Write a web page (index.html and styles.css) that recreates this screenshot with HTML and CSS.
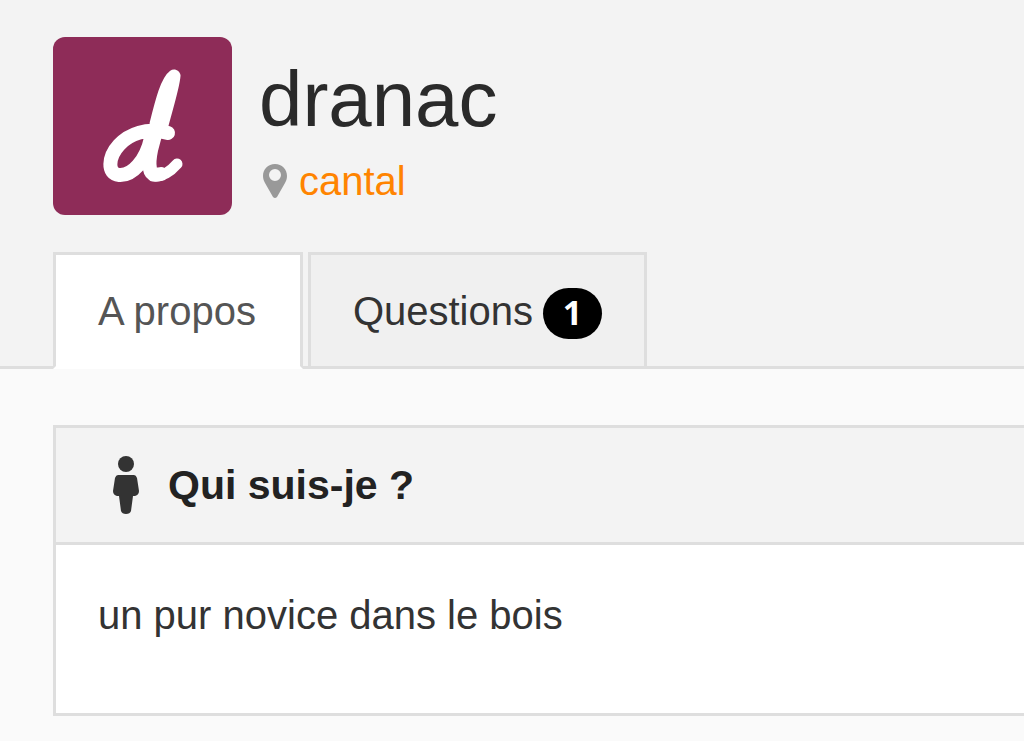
FILE: index.html
```
<!DOCTYPE html>
<html lang="fr">
<head>
<meta charset="utf-8" />
<meta name="viewport" content="width=device-width, initial-scale=1" />
<title>dranac</title>
<link rel="stylesheet" href="styles.css">
</head>

<body>
	<header class="profileHeader">
		<div class="profile">
			<svg class="avatar" viewBox="0 0 179 178" role="img" aria-label="Avatar">
				<rect width="179" height="178" rx="12" fill="#8e2c58" />
				<g fill="none" stroke="#fff" stroke-linecap="round" stroke-linejoin="round">
					<path stroke-width="13" d="M121 39C114 44 109 63 103 87M121 39C120 50 114 69 109 88" />
					<path stroke-width="14" d="M115 96C94 90 76 97 66 108C55 120 54 137 66 138C79 139 93 124 98 101" />
					<path stroke-width="14" d="M106 88C99 104 95 123 97 132C98 138 103 138 108 137" />
					<path stroke-width="11" d="M100 139C109 140 117 135 124 127" />
				</g>
			</svg>
			<div class="identity">
				<h1 class="userName">dranac</h1>
				<p class="location">
					<svg class="pin" viewBox="0 0 24 34" aria-hidden="true">
						<path fill="#999" fill-rule="evenodd" d="M12 0C5 0 0 5 0 12C0 15 1 17 2 19L10 33Q12 35 14 33L22 19C23 17 24 15 24 12C24 5 19 0 12 0ZM12 5A6 6 0 1 1 12 17A6 6 0 1 1 12 5Z" />
					</svg>
					<a href="#cantal">cantal</a>
				</p>
			</div>
		</div>
		<nav class="tabs">
			<a class="tab active" href="#about">A propos</a>
			<a class="tab" href="#questions">Questions <span class="badge">1</span></a>
		</nav>
	</header>

	<main class="content">
		<section class="panel" id="about">
			<h2 class="panelTitle">
				<svg class="person" viewBox="0 0 26 58" aria-hidden="true">
					<g fill="#333">
						<circle cx="13" cy="8" r="8" />
						<path d="M5 19H21Q23 19 24 22L26 35Q26 39 22 40H20L18 55Q17 58 13 58Q9 58 8 55L6 40H4Q0 39 0 35L2 22Q3 19 5 19Z" />
					</g>
				</svg>
				Qui suis-je ?
			</h2>
			<p class="panelBody">un pur novice dans le bois</p>
		</section>
	</main>
</body>
</html>
```
FILE: styles.css
```
* {
	box-sizing: border-box;
}

body {
	margin: 0;
	background-color: #fafafa;
	color: #333;
	font-family: "Liberation Sans", Arial, sans-serif;
	font-size: 40px;
	line-height: 48px;
}

h1, h2, p {
	margin: 0;
}

a {
	text-decoration: none;
}

.profileHeader {
	padding: 37px 0 0 53px;
	background-color: #f3f3f3;
	border-bottom: 3px solid #dedede;
}

.profile {
	display: flex;
	gap: 27px;
}

.avatar {
	width: 179px;
	height: 178px;
}

.identity {
	padding-top: 18px;
}

.userName {
	color: #2a2a2a;
	font-size: 78px;
	font-weight: normal;
	line-height: 88px;
}

.location {
	display: flex;
	align-items: center;
	gap: 12px;
	padding: 14px 0 0 4px;
}

.location a {
	color: #ff8400;
}

.pin {
	width: 24px;
	height: 34px;
}

.tabs {
	display: flex;
	gap: 5px;
	margin: 37px 0 -3px;
}

.tab {
	display: flex;
	align-items: center;
	gap: 10px;
	height: 117px;
	padding: 0 42px;
	background-color: #f0f0f0;
	border: 3px solid #dedede;
	color: #333;
}

.tab.active {
	padding-right: 44px;
	background-color: #fff;
	border-bottom-color: #fff;
	color: #555;
}

.badge {
	width: 59px;
	height: 51px;
	margin-top: 5px;
	border-radius: 26px;
	background-color: #000;
	color: #fff;
	font-family: "Open Sans", sans-serif;
	font-size: 34px;
	font-weight: bold;
	line-height: 48px;
	text-align: center;
}

.content {
	padding: 56px 0 24px 53px;
}

/* runs to the right edge of the window */
.panel {
	background-color: #fff;
	border: 3px solid #dedede;
	border-right: 0;
}

.panelTitle {
	display: flex;
	align-items: center;
	gap: 29px;
	height: 117px;
	padding: 0 57px;
	background-color: #f3f3f3;
	border-bottom: 3px solid #dedede;
	color: #222;
	font-size: 41px;
}

.person {
	width: 26px;
	height: 58px;
}

.panelBody {
	padding: 46px 42px 74px;
}
```
